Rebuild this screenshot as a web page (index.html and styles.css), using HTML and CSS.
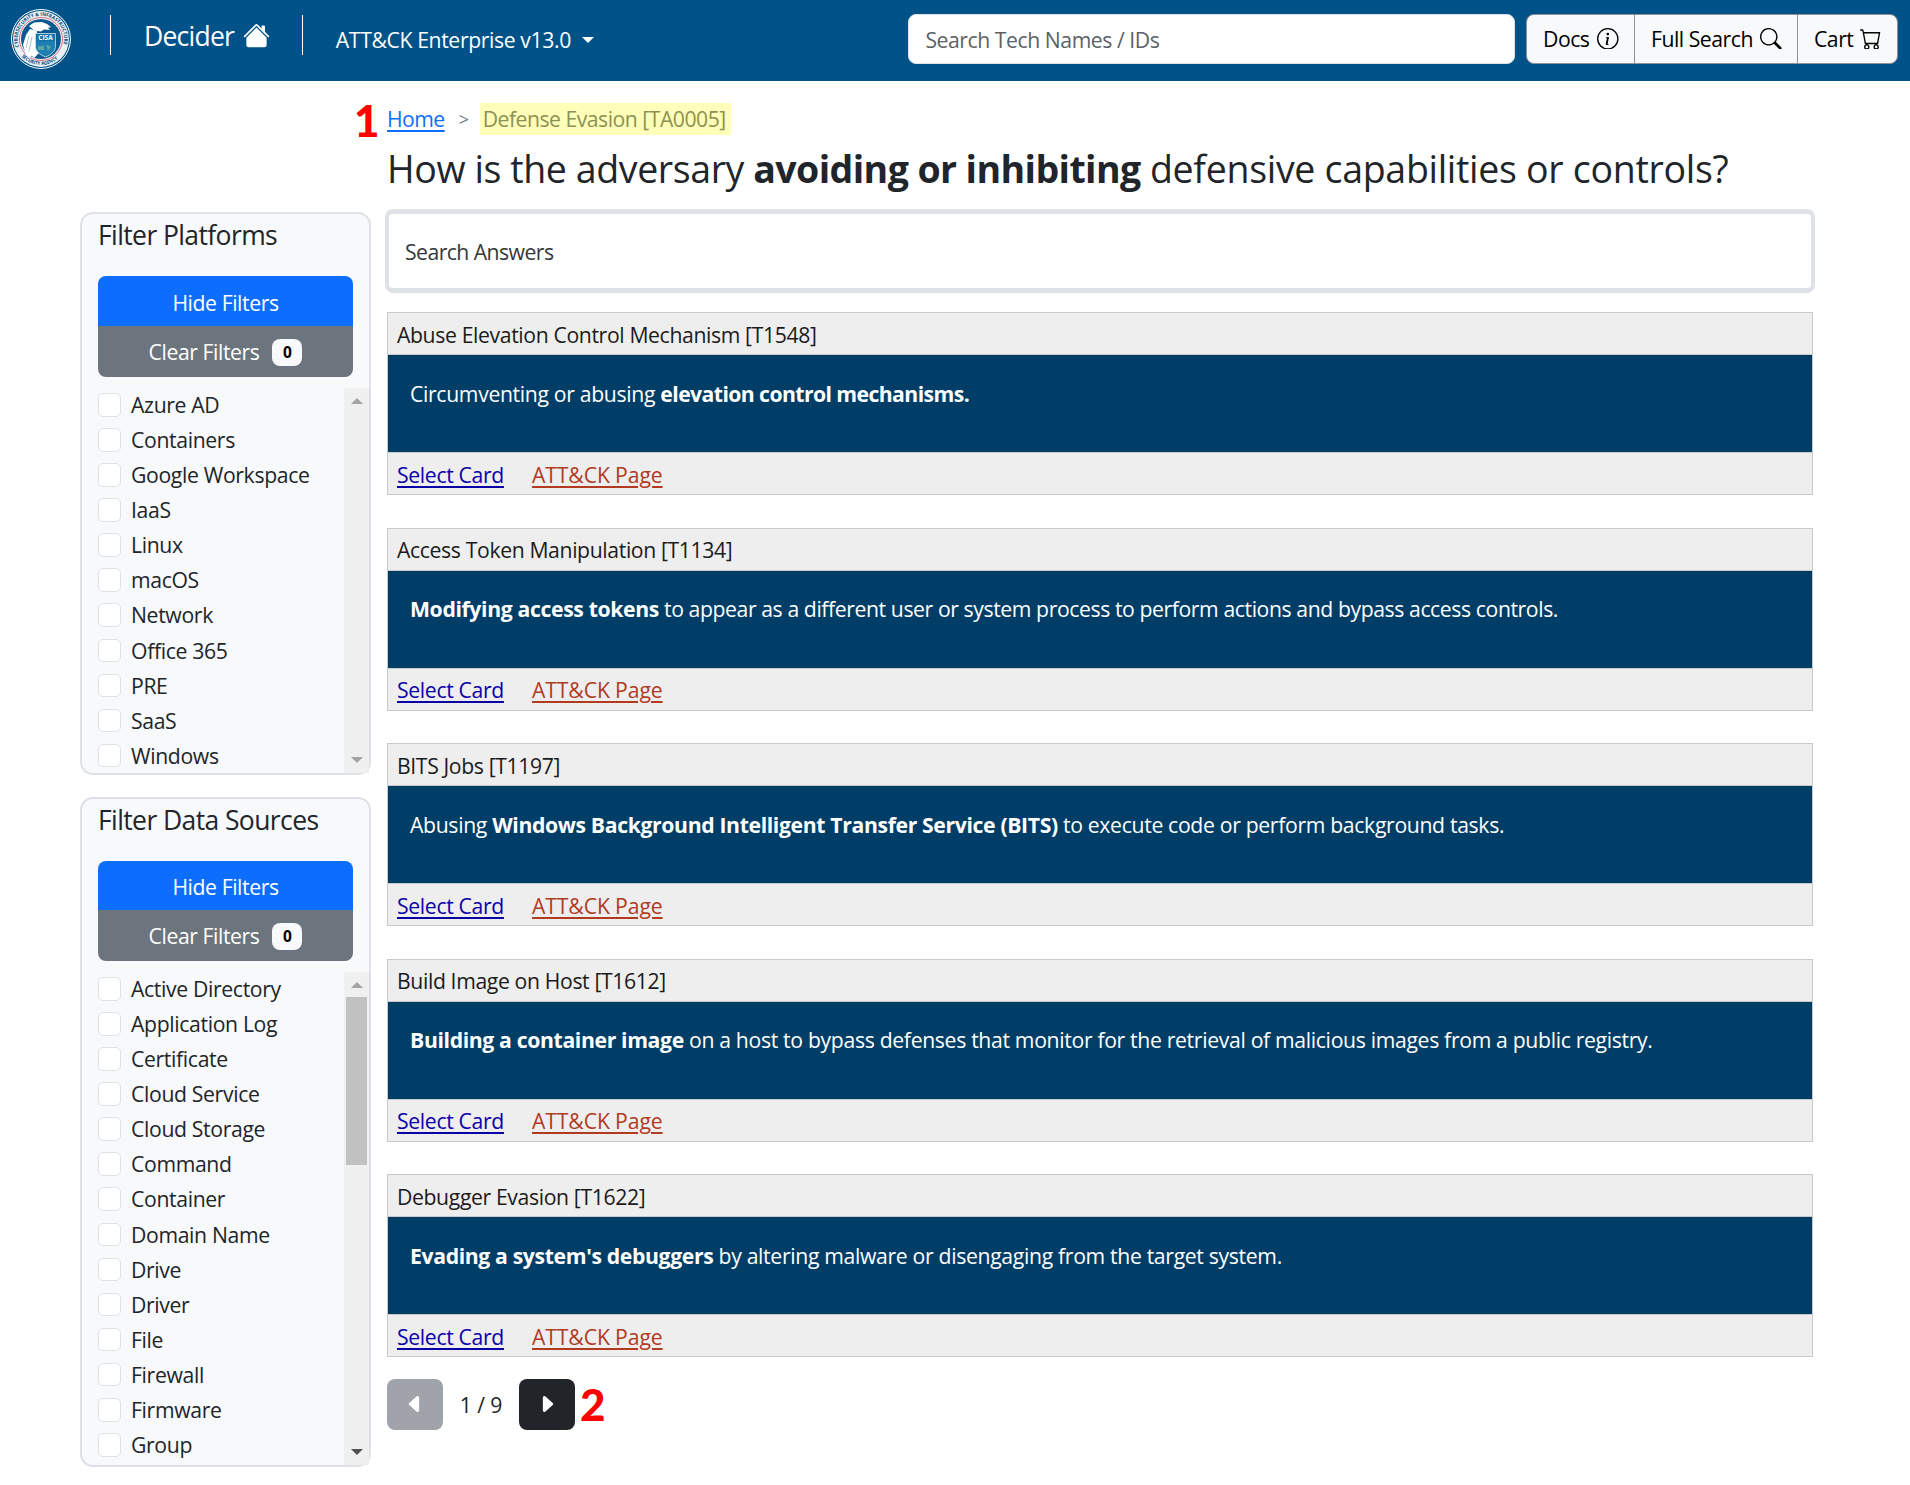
FILE: index.html
```html
<!DOCTYPE html>
<html lang="en">
<head>
<meta charset="utf-8">
<title>Decider</title>
<link rel="stylesheet" href="styles.css">
</head>
<body>
<header class="navbar">
  <svg class="logo" viewBox="0 0 60 60">
    <defs>
      <path id="arc-top" d="M8.200 38 A23.200 23.200 0 1 1 51.800 38"/>
      <path id="arc-bottom" d="M10.500 47.500 A26.500 26.500 0 0 0 49.500 47.500"/>
    </defs>
    <circle cx="30" cy="30" r="29.500" fill="#005288" stroke="#fff" stroke-width="1"/>
    <circle cx="30" cy="30" r="28" fill="#e9f1f6"/>
    <circle cx="30" cy="30" r="21.500" fill="#fff" stroke="#d8647a" stroke-width="1"/>
    <circle cx="30" cy="30" r="20" fill="#0b5a8e"/>
    <text class="logo-ring"><textPath href="#arc-top" textLength="86" lengthAdjust="spacingAndGlyphs">CYBERSECURITY &amp; INFRASTRUCTURE</textPath></text>
    <text class="logo-ring"><textPath href="#arc-bottom" textLength="40" lengthAdjust="spacingAndGlyphs">SECURITY AGENCY</textPath></text>
    <path d="M18 17 l5-3.500 8-.5 5 2 4 3-3 1 2 2-6-.5 -3 2 -7-1 -2-2z" fill="#fff"/>
    <path d="M19 20 l7 2 -1 18 -6 9 -4-3 -3-10 3-10z" fill="#fff"/>
    <path d="M16 42 l7-5 5 7 -5 5z" fill="#fff"/>
    <path d="M21 28 l-3 14M18 27l-3 12" stroke="#8fb3cc" stroke-width=".8"/>
    <path d="M24.500 24.500h20v14q-1 6-10 9.500-9-3.500-10-9.500z" fill="#1e7fb0" stroke="#cfe2ee" stroke-width=".8"/>
    <path d="M25 25h19v7.500h-19z" fill="#1573aa"/>
    <path d="M27 37h6v4h-6zM35 35l5 3-3 4z" fill="#5aa7a0"/>
    <text class="logo-name" x="34.500" y="31.200">CISA</text>
  </svg>
  <a class="brand">Decider
    <svg class="icon-home" viewBox="0 0 16 16" fill="currentColor"><path d="M8.707 1.500a1 1 0 0 0-1.414 0L.646 8.146a.5.5 0 0 0 .708.708L8 2.207l6.646 6.647a.5.5 0 0 0 .708-.708L13 5.793V2.500a.5.5 0 0 0-.5-.5h-1a.5.5 0 0 0-.5.5v1.293L8.707 1.500Z"/><path d="m8 3.293 6 6V13.500a1.500 1.500 0 0 1-1.500 1.500h-9A1.500 1.500 0 0 1 2 13.500V9.293l6-6Z"/></svg>
  </a>
  <a class="version">ATT&amp;CK Enterprise v13.0<span class="caret"></span></a>
  <div class="tech-search">Search Tech Names / IDs</div>
  <div class="nav-buttons">
    <a class="nav-button docs"><span>Docs</span><svg class="icon" viewBox="0 0 16 16" fill="currentColor"><path d="M8 15A7 7 0 1 1 8 1a7 7 0 0 1 0 14zm0 1A8 8 0 1 0 8 0a8 8 0 0 0 0 16z"/><path d="m8.930 6.588-2.290.287-.082.380.450.083c.294.070.352.176.288.469l-.738 3.468c-.194.897.105 1.319.808 1.319.545 0 1.178-.252 1.465-.598l.088-.416c-.200.176-.492.246-.686.246-.275 0-.375-.193-.304-.533L8.930 6.588zM9 4.500a1 1 0 1 1-2 0 1 1 0 0 1 2 0z"/></svg></a>
    <a class="nav-button full"><span>Full Search</span><svg class="icon" viewBox="0 0 16 16" fill="currentColor"><path d="M11.742 10.344a6.500 6.500 0 1 0-1.397 1.398h-.001c.030.040.062.078.098.115l3.850 3.850a1 1 0 0 0 1.415-1.414l-3.850-3.850a1.007 1.007 0 0 0-.115-.100zM12 6.500a5.500 5.500 0 1 1-11 0 5.500 5.500 0 0 1 11 0z"/></svg></a>
    <a class="nav-button cart"><span>Cart</span><svg class="icon" viewBox="0 0 16 16" fill="currentColor"><path d="M0 1.500A.5.5 0 0 1 .5 1H2a.5.5 0 0 1 .485.379L2.890 3H14.500a.5.5 0 0 1 .491.592l-1.500 8A.5.5 0 0 1 13 12H4a.5.5 0 0 1-.491-.408L2.010 3.607 1.610 2H.5a.5.5 0 0 1-.5-.5zM3.102 4l1.313 7h8.170l1.313-7H3.102zM5 12a2 2 0 1 0 0 4 2 2 0 0 0 0-4zm7 0a2 2 0 1 0 0 4 2 2 0 0 0 0-4zm-7 1a1 1 0 1 1 0 2 1 1 0 0 1 0-2zm7 0a1 1 0 1 1 0 2 1 1 0 0 1 0-2z"/></svg></a>
  </div>
</header>

<div class="page">
  <aside class="sidebar">
    <section class="panel platforms">
      <h2 class="panel-title">Filter Platforms</h2>
      <div class="panel-buttons">
        <div class="hide-filters">Hide Filters</div>
        <div class="clear-filters">Clear Filters<span class="badge">0</span></div>
      </div>
      <div class="filter-body">
        <ul class="filter-list">
          <li>Azure AD</li><li>Containers</li><li>Google Workspace</li><li>IaaS</li><li>Linux</li><li>macOS</li><li>Network</li><li>Office 365</li><li>PRE</li><li>SaaS</li><li>Windows</li>
        </ul>
        <div class="scrollbar"><i class="arrow up"></i><i class="arrow down"></i></div>
      </div>
    </section>
    <section class="panel sources">
      <h2 class="panel-title">Filter Data Sources</h2>
      <div class="panel-buttons">
        <div class="hide-filters">Hide Filters</div>
        <div class="clear-filters">Clear Filters<span class="badge">0</span></div>
      </div>
      <div class="filter-body">
        <ul class="filter-list">
          <li>Active Directory</li><li>Application Log</li><li>Certificate</li><li>Cloud Service</li><li>Cloud Storage</li><li>Command</li><li>Container</li><li>Domain Name</li><li>Drive</li><li>Driver</li><li>File</li><li>Firewall</li><li>Firmware</li><li>Group</li>
        </ul>
        <div class="scrollbar"><i class="arrow up"></i><i class="thumb"></i><i class="arrow down active"></i></div>
      </div>
    </section>
  </aside>

  <main class="content">
    <nav class="breadcrumb"><b class="marker marker-one">1</b><a class="home">Home</a><span class="separator">&gt;</span><span class="current">Defense Evasion [TA0005]</span></nav>
    <h1 class="question">How is the adversary <b>avoiding or inhibiting</b> <span class="question-end">defensive capabilities or controls?</span></h1>
    <div class="answer-search">Search Answers</div>
    <div class="cards">
      <article class="card"><h3>Abuse Elevation Control Mechanism [T1548]</h3><p>Circumventing or abusing <b class="tight">elevation control mechanisms.</b></p><footer><a class="select">Select Card</a><a class="attack">ATT&amp;CK Page</a></footer></article>
      <article class="card"><h3>Access Token Manipulation [T1134]</h3><p class="snug"><b>Modifying access tokens</b> to appear as a different user or system process to perform actions and bypass access controls.</p><footer><a class="select">Select Card</a><a class="attack">ATT&amp;CK Page</a></footer></article>
      <article class="card"><h3>BITS Jobs [T1197]</h3><p>Abusing <b>Windows Background Intelligent Transfer Service (BITS)</b> to execute code or perform background tasks.</p><footer><a class="select">Select Card</a><a class="attack">ATT&amp;CK Page</a></footer></article>
      <article class="card"><h3>Build Image on Host [T1612]</h3><p><b>Building a container image</b> on a host to bypass defenses that monitor for the retrieval of malicious images from a public registry.</p><footer><a class="select">Select Card</a><a class="attack">ATT&amp;CK Page</a></footer></article>
      <article class="card"><h3>Debugger Evasion [T1622]</h3><p><b>Evading a system's debuggers</b> by altering malware or disengaging from the target system.</p><footer><a class="select">Select Card</a><a class="attack">ATT&amp;CK Page</a></footer></article>
    </div>
    <div class="pager">
      <span class="page-button previous"><svg viewBox="0 0 16 16" fill="currentColor"><path d="m3.860 8.753 5.482 4.796c.646.566 1.658.106 1.658-.753V3.204a1 1 0 0 0-1.659-.753l-5.480 4.796a1 1 0 0 0 0 1.506z"/></svg></span>
      <span class="page-count">1 / 9</span>
      <span class="page-button next"><svg viewBox="0 0 16 16" fill="currentColor"><path d="m12.140 8.753-5.482 4.796c-.646.566-1.658.106-1.658-.753V3.204a1 1 0 0 1 1.659-.753l5.480 4.796a1 1 0 0 1 0 1.506z"/></svg></span>
      <b class="marker marker-two">2</b>
    </div>
  </main>
</div>
</body>
</html>
```
FILE: styles.css
```css
* { box-sizing: border-box; }

body {
  margin: 0;
  background: #fff;
  color: #212529;
  font: 400 21.2px/32.4px "Open Sans", "Noto Sans", sans-serif;
  letter-spacing: -.37px;
  white-space: nowrap;
}

h1, h2, h3, p, ul { margin: 0; padding: 0; font-weight: 400; }

/* Top bar */
.navbar {
  display: flex;
  align-items: center;
  height: 81px;
  padding: 0 12px 3px 11px;
  background: #005288;
  color: #fff;
}
.logo { width: 60px; height: 60px; margin-right: 39px; }
.logo-ring { font-size: 5px; font-weight: 700; letter-spacing: 0; fill: #0b4a7a; }
.logo-name { font-size: 6.5px; font-weight: 700; letter-spacing: 0; fill: #fff; text-anchor: middle; }
.brand {
  display: flex;
  align-items: center;
  width: 193px;
  height: 40px;
  margin: -8px 33px 0 0;
  padding: 2px 0 0 33px;
  border: solid #fff;
  border-width: 0 1px;
  font-size: 26.5px;
  letter-spacing: -.75px;
}
.icon-home { width: 27px; height: 27px; margin: -2px 0 0 9px; }
.version { display: flex; align-items: center; width: 573px; letter-spacing: -.38px; padding-top: 3px; }
.caret { border: 6.5px solid transparent; border-top-color: #fff; border-bottom: 0; margin: -2px 0 0 11px; }
.tech-search {
  width: 607px;
  height: 50px;
  padding: 9px 16px;
  border: 1px solid #dee2e6;
  border-radius: 8px;
  background: #fff;
  color: #5c6166;
  letter-spacing: -.45px;
}
.nav-buttons {
  display: flex;
  height: 50px;
  margin-left: 11px;
  border: 1px solid #8e9092;
  border-radius: 8px;
  background: #f8f9fa;
  color: #000;
}
.nav-button { display: flex; align-items: center; padding: 1px 15px 0 16px; letter-spacing: -.48px; }
.nav-button + .nav-button { border-left: 1px solid #8e9092; }
.icon { width: 21.6px; height: 21.6px; margin: -2px 0 0 auto; }
.docs { width: 107px; }
.full { width: 163px; }
.cart { width: 100px; }

/* Page columns */
.page { display: flex; gap: 16px; padding-left: 80px; }
.sidebar { display: flex; flex-direction: column; gap: 22px; width: 291px; padding-top: 131px; }
.content { width: 1426px; padding-top: 21px; }

/* Filter panels */
.panel {
  display: flex;
  flex-direction: column;
  padding: 5px 0 0 16px;
  border: 2px solid #dee2e6;
  border-radius: 13px;
  background: #f8f9fb;
}
.platforms { height: 563px; }
.sources { height: 670px; }
.panel-title { height: 57px; font-size: 26.5px; letter-spacing: -.6px; }
.panel-buttons { width: 255px; margin-bottom: 11px; border-radius: 8px; overflow: hidden; color: #fff; text-align: center; letter-spacing: -.42px; }
.hide-filters { height: 50px; padding-top: 11px; background: #0d6efd; }
.clear-filters { display: flex; align-items: center; justify-content: center; height: 51px; padding-top: 2px; background: #6c757d; }
.sources .hide-filters { height: 49px; padding-top: 10px; }
.badge { width: 30px; height: 27px; margin-left: 13px; border-radius: 8px; background: #f8f9fa; color: #000; font-size: 15.5px; font-weight: 700; line-height: 27px; letter-spacing: 0; }
.filter-body { display: flex; flex: 1; justify-content: space-between; min-height: 0; }
.filter-list { list-style: none; padding-top: 1px; }
.filter-list li { display: flex; height: 35.08px; letter-spacing: -.35px; }
.filter-list li::before {
  content: "";
  width: 21px;
  height: 21.6px;
  margin: 4px 10px 0 0;
  border: 1px solid #dee2e6;
  border-radius: 5px;
  background: #fff;
}
.scrollbar { display: flex; flex-direction: column; align-items: center; width: 25px; padding: 10px 0; background: #f0f0f0; }
.arrow { border: 6px solid transparent; }
.up { border-top: 0; border-bottom-color: #a3a3a3; }
.down { margin-top: auto; border-bottom: 0; border-top-color: #a3a3a3; }
.down.active { border-top-color: #505050; }
.thumb { width: 21px; height: 168px; margin-top: 9px; background: #c1c1c1; }

/* Question */
.breadcrumb { position: relative; display: flex; align-items: center; height: 33px; padding-top: 1px; }
.home { padding-top: 1px; color: #0d6efd; text-decoration: underline; text-decoration-thickness: 2px; text-underline-offset: 3px; letter-spacing: -.55px; }
.separator { width: 35px; padding: 1px 0 0 14px; font-size: 18px; color: #6c757d; }
.current { height: 32px; padding: 0 5px 0 3px; background: #ffffb9; color: #8d9153; letter-spacing: -.5px; line-height: 31px; }
.marker { color: #f00; font: 900 44px/45px Lato, sans-serif; letter-spacing: 0; }
.marker-one { position: absolute; left: -33px; top: -4px; }
.question { height: 74px; padding: 11px 0 0; font-size: 37.5px; line-height: 45px; font-weight: 500; letter-spacing: -.4px; }
.question b { font-weight: 700; letter-spacing: -.59px; }
.question-end { letter-spacing: -.3px; }
.answer-search { height: 84px; margin: 0 -2px 19px; padding: 22px 16px; border: solid #dee2e6; border-width: 5px 4px; border-radius: 8px; color: #33373b; letter-spacing: -.55px; }

/* Answer cards */
.cards { display: flex; flex-direction: column; gap: 32.6px; color: #1b1b1b; }
.card { height: 183px; border: 1px solid #c9c9c9; background: #eee; }
.card h3 { height: 42px; padding: 5.6px 9px; font-size: 21.2px; border-bottom: 1px solid #c9c9c9; }
.card p { height: 98px; padding: 22.6px 22px; background: #003e67; border-bottom: 1px solid #c9c9c9; color: #fff; letter-spacing: -.33px; }
.card p.snug { letter-spacing: -.41px; }
.card p b { letter-spacing: -.36px; }
.card p b.tight { letter-spacing: -.58px; }
.card footer { display: flex; gap: 28px; padding: 5.6px 9px; }
.select, .attack { text-decoration: underline; text-decoration-thickness: 2px; text-underline-offset: 3px; }
.select { color: #0a00a8; letter-spacing: -.34px; }
.attack { color: #b23a1e; letter-spacing: -.12px; }

/* Pager */
.pager { display: flex; align-items: center; margin-top: 21.6px; height: 51px; }
.page-button { display: flex; align-items: center; justify-content: center; width: 56px; height: 51px; border-radius: 8px; background: #212529; color: #fff; }
.previous { background: #a0a4aa; }
.page-button svg { width: 22px; height: 22px; }
.page-count { width: 76px; padding-top: 1px; text-align: center; letter-spacing: -.1px; }
.marker-two { margin-left: 5px; }
```
